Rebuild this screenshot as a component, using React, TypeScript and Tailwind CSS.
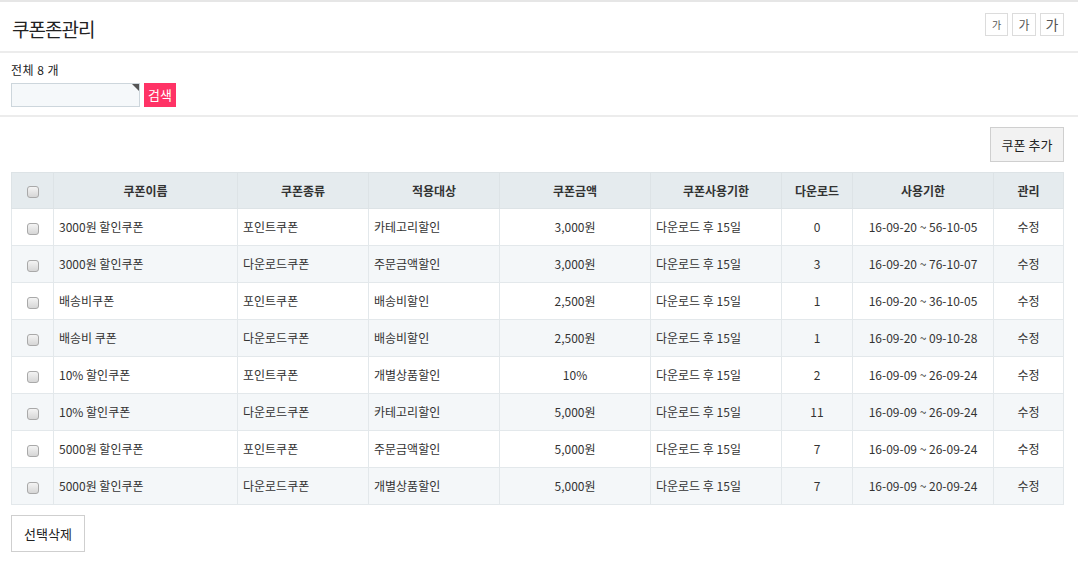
const rows = [
  ["3000원 할인쿠폰", "포인트쿠폰", "카테고리할인", "3,000원", "다운로드 후 15일", "0", "16-09-20 ~ 56-10-05"],
  ["3000원 할인쿠폰", "다운로드쿠폰", "주문금액할인", "3,000원", "다운로드 후 15일", "3", "16-09-20 ~ 76-10-07"],
  ["배송비쿠폰", "포인트쿠폰", "배송비할인", "2,500원", "다운로드 후 15일", "1", "16-09-20 ~ 36-10-05"],
  ["배송비 쿠폰", "다운로드쿠폰", "배송비할인", "2,500원", "다운로드 후 15일", "1", "16-09-20 ~ 09-10-28"],
  ["10% 할인쿠폰", "포인트쿠폰", "개별상품할인", "10%", "다운로드 후 15일", "2", "16-09-09 ~ 26-09-24"],
  ["10% 할인쿠폰", "다운로드쿠폰", "카테고리할인", "5,000원", "다운로드 후 15일", "11", "16-09-09 ~ 26-09-24"],
  ["5000원 할인쿠폰", "포인트쿠폰", "주문금액할인", "5,000원", "다운로드 후 15일", "7", "16-09-09 ~ 26-09-24"],
  ["5000원 할인쿠폰", "다운로드쿠폰", "개별상품할인", "5,000원", "다운로드 후 15일", "7", "16-09-09 ~ 20-09-24"],
];

function Check() {
  return (
    <span className="inline-block h-[12px] w-[12px] rounded-[3px] border border-[#a9a9a9] bg-gradient-to-b from-[#f4f4f4] to-[#d6d6d6] align-middle" />
  );
}

export default function App() {
  return (
    <div className="h-[561px] w-[1078px] overflow-hidden border-t-2 border-[#e6e6e6] bg-white text-[12px] text-[#333] [font-family:'Noto_Sans_CJK_KR','Noto_Sans',sans-serif]">
      <div className="flex h-[51px] items-center justify-between border-b-2 border-[#ececec] pl-[12px] pr-[14px]">
        <h1 className="pt-[6px] text-[19px] font-normal tracking-[-1px] text-[#222]">쿠폰존관리</h1>
        <div className="flex gap-[4px] pb-[4px]">
          <button className="h-[23px] w-[23px] border border-[#dcdcdc] text-[10px] text-[#555]">가</button>
          <button className="h-[23px] w-[24px] border border-[#dcdcdc] text-[12px] text-[#555]">가</button>
          <button className="h-[23px] w-[24px] border border-[#dcdcdc] text-[14px] text-[#555]">가</button>
        </div>
      </div>

      <div className="h-[64px] border-b-2 border-[#ececec] px-[11px] pt-[8px]">
        <div className="leading-[18px] tracking-[0.5px] text-[#222]">전체 8 개</div>
        <div className="mt-[4px] flex gap-[4px]">
          <div className="relative h-[24px] w-[129px] border border-[#cdd6dc] bg-[#f5f8fa]">
            <span className="absolute right-0 top-0 h-0 w-0 border-l-[7px] border-t-[7px] border-l-transparent border-t-[#555]" />
          </div>
          <button className="h-[24px] w-[32px] bg-[#ff3366] text-[13px] text-white">검색</button>
        </div>
      </div>

      <div className="flex justify-end px-[14px] pt-[10px]">
        <button className="h-[35px] w-[74px] border border-[#cfcfcf] bg-[#f2f2f2] text-[13px] text-[#222]">쿠폰 추가</button>
      </div>

      <div className="px-[11px] pt-[10px]">
        <table className="w-[1053px] table-fixed border-collapse border border-[#dde3e6]">
          <colgroup>
            <col className="w-[42px]" />
            <col className="w-[184px]" />
            <col className="w-[131px]" />
            <col className="w-[131px]" />
            <col className="w-[151px]" />
            <col className="w-[131px]" />
            <col className="w-[71px]" />
            <col className="w-[141px]" />
            <col className="w-[70px]" />
          </colgroup>
          <thead>
            <tr className="h-[36px] bg-[#e5ebee] font-bold text-[#333]">
              <th className="border border-[#dde3e6]"><Check /></th>
              {["쿠폰이름", "쿠폰종류", "적용대상", "쿠폰금액", "쿠폰사용기한", "다운로드", "사용기한", "관리"].map((h) => (
                <th key={h} className="border border-[#dde3e6] text-[12px]">{h}</th>
              ))}
            </tr>
          </thead>
          <tbody>
            {rows.map((r, i) => (
              <tr key={i} className={i % 2 ? "h-[37px] bg-[#f4f7f9]" : "h-[37px] bg-white"}>
                <td className="border border-[#e3e8eb] text-center"><Check /></td>
                <td className="border border-[#e3e8eb] px-[5px]">{r[0]}</td>
                <td className="border border-[#e3e8eb] px-[5px]">{r[1]}</td>
                <td className="border border-[#e3e8eb] px-[5px]">{r[2]}</td>
                <td className="border border-[#e3e8eb] text-center">{r[3]}</td>
                <td className="border border-[#e3e8eb] px-[5px]">{r[4]}</td>
                <td className="border border-[#e3e8eb] text-center">{r[5]}</td>
                <td className="border border-[#e3e8eb] text-center">{r[6]}</td>
                <td className="border border-[#e3e8eb] text-center">수정</td>
              </tr>
            ))}
          </tbody>
        </table>
        <button className="mt-[10px] h-[37px] w-[74px] border border-[#cfcfcf] bg-white text-[13px] text-[#222]">선택삭제</button>
      </div>
    </div>
  );
}
